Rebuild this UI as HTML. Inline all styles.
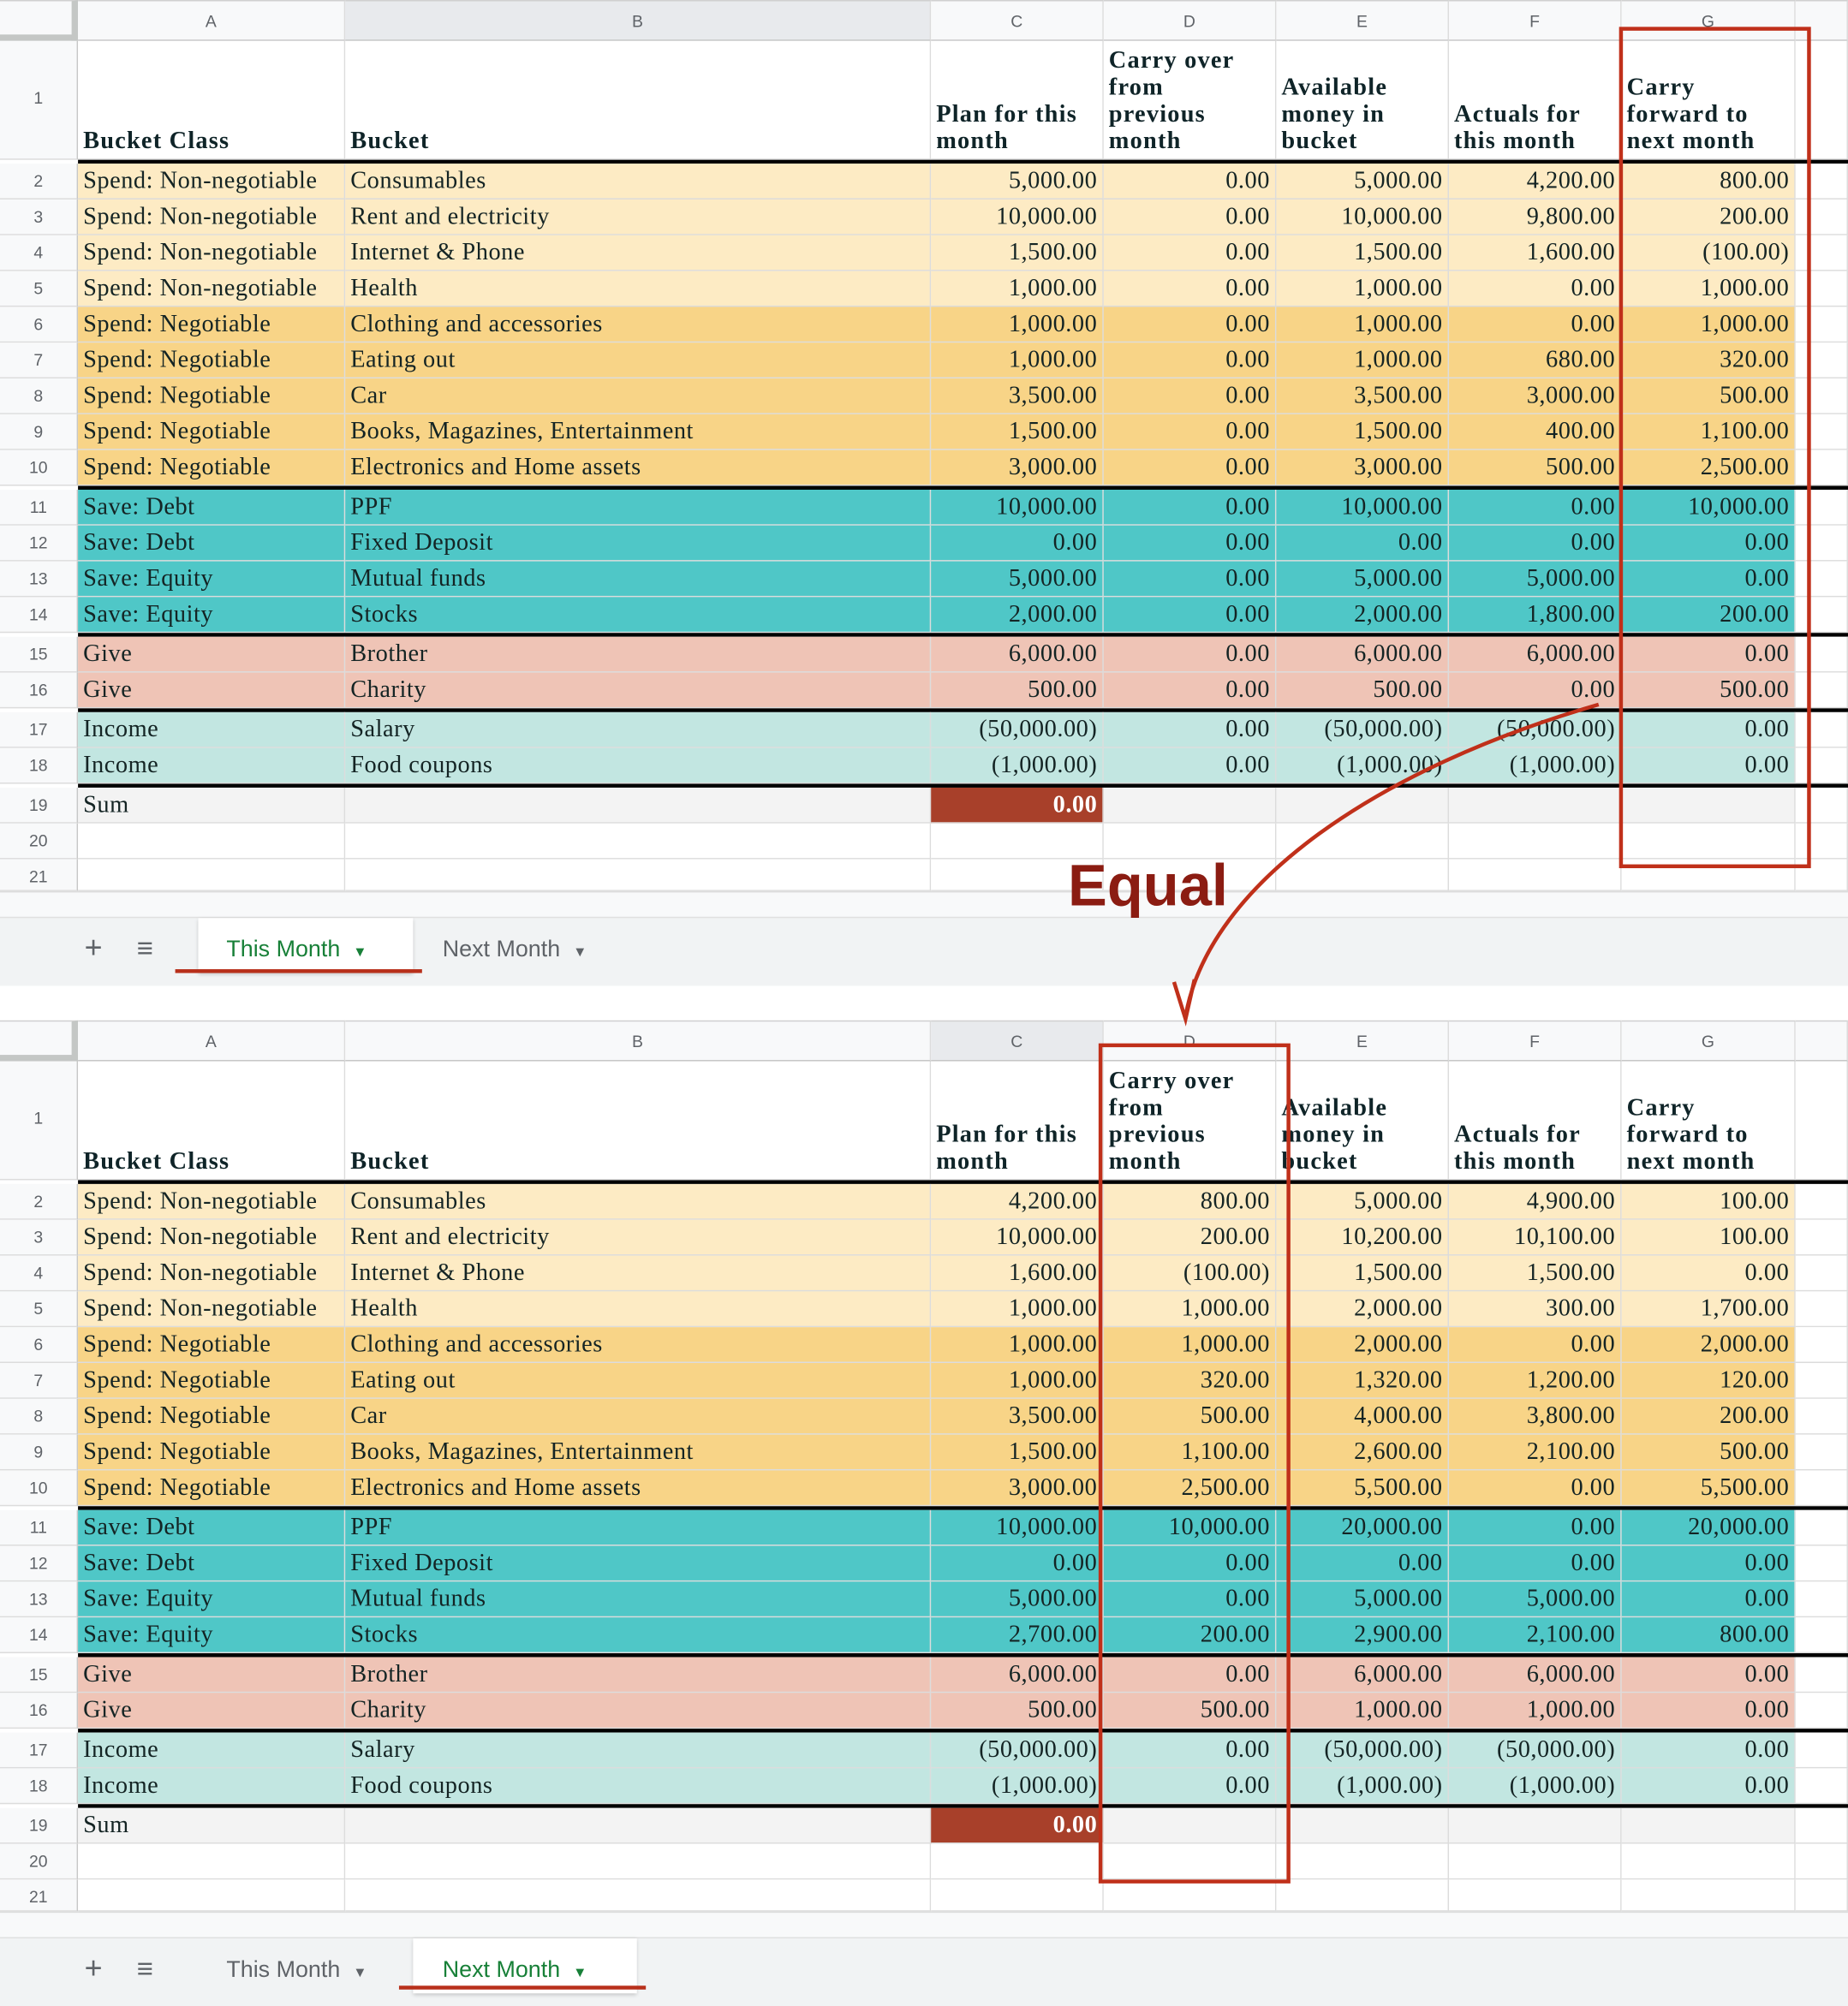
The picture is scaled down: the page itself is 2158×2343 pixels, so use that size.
<!DOCTYPE html>
<html><head><meta charset="utf-8">
<style>
html,body{margin:0;padding:0;background:#fff;}
body{width:2158px;height:2341px;overflow:hidden;position:relative;}
#w{position:absolute;left:0;top:0;width:1445px;height:1568px;transform:scale(1.49343);transform-origin:0 0;}
.pn{position:absolute;left:0;width:1445px;height:770px;}
.r,.hd,.h1{position:absolute;left:0;width:1445px;display:grid;grid-template-columns:61px 209px 458px 135px 135px 135px 135px 136px 41px;}
.r{height:28px;}
.r p,.h1 p,.hd p{margin:0;box-sizing:border-box;border-right:1px solid #dcdcdc;border-bottom:1px solid #dcdcdc;overflow:hidden;white-space:nowrap;}
.r p{font:19px/27px "Liberation Serif",serif;letter-spacing:0.35px;color:#142424;padding:0 4px;}
.r p:nth-child(n+4){text-align:right;}
.r p:first-child,.h1 p:first-child{background:#f8f9fa;font:13px/27px "Liberation Sans",sans-serif;letter-spacing:0;color:#5f6368;text-align:center;border-right:1px solid #c7c7c7;}
.r p:last-child{background:#fff;}
.hd{top:0;height:32px;}
.hd p{background:#f8f9fa;font:13px/32px "Liberation Sans",sans-serif;color:#5f6368;text-align:center;border-bottom:1px solid #c4c4c4;border-top:1px solid #d0d0d0;}
.hd p:first-child{border-right:5px solid #c4c7c5;border-bottom:5px solid #c4c7c5;}
.hd p.sel{background:#e8eaed;}
.h1{top:32px;height:93px;}
.h1 p{font:bold 19px/21px "Liberation Serif",serif;letter-spacing:0.8px;color:#0f2428;padding:0 4px 3px;display:flex;align-items:flex-end;white-space:nowrap;background:#fff;}
.h1 p:first-child{align-items:center;justify-content:center;font-weight:normal;line-height:21px;}
.tk{position:absolute;left:61px;width:1384px;height:3px;background:#000;}
.y1 p{background:#fdebc4;}
.y2 p{background:#f8d487;}
.t1 p{background:#4fc7c7;}
.g1 p{background:#efc4b6;}
.i1 p{background:#c2e6e1;}
.sm p{background:#f3f3f3;}
.wh p{background:#fff;}
.sm p.red{background:#a8402a;color:#fff;font-weight:bold;}
.strip{position:absolute;left:0;width:1445px;height:20px;background:#f8f9fa;border-top:1px solid #dcdcdc;}
.bar{position:absolute;left:0;width:1445px;height:53px;background:#f1f3f4;border-top:1px solid #e0e0e0;}
.bar span{position:absolute;font:18px/48px "Liberation Sans",sans-serif;color:#5f6368;}
.tab{position:absolute;top:0;height:43px;background:#fff;box-shadow:0 1px 3px rgba(0,0,0,.2);}
.act{color:#188038 !important;font-weight:bold;}
.ul{position:absolute;height:3px;background:#b8301b;}
.box{position:absolute;border:3px solid #c0301a;box-sizing:border-box;}
</style></head><body><div id="w">

<!-- TOP PANEL -->
<div class="pn" style="top:0">
<div class="hd"><p></p><p>A</p><p class="sel">B</p><p>C</p><p>D</p><p>E</p><p>F</p><p>G</p><p></p></div>
<div class="h1"><p>1</p><p>Bucket Class</p><p>Bucket</p><p><span>Plan for this<br>month</span></p><p><span>Carry over<br>from<br>previous<br>month</span></p><p><span>Available<br>money in<br>bucket</span></p><p><span>Actuals for<br>this month</span></p><p><span>Carry<br>forward to<br>next month</span></p><p></p></div>
<div class="tk" style="top:125px"></div>
<div class="r y1" style="top:128px"><p>2</p><p>Spend: Non-negotiable</p><p>Consumables</p><p>5,000.00</p><p>0.00</p><p>5,000.00</p><p>4,200.00</p><p>800.00</p><p></p></div>
<div class="r y1" style="top:156px"><p>3</p><p>Spend: Non-negotiable</p><p>Rent and electricity</p><p>10,000.00</p><p>0.00</p><p>10,000.00</p><p>9,800.00</p><p>200.00</p><p></p></div>
<div class="r y1" style="top:184px"><p>4</p><p>Spend: Non-negotiable</p><p>Internet &amp; Phone</p><p>1,500.00</p><p>0.00</p><p>1,500.00</p><p>1,600.00</p><p>(100.00)</p><p></p></div>
<div class="r y1" style="top:212px"><p>5</p><p>Spend: Non-negotiable</p><p>Health</p><p>1,000.00</p><p>0.00</p><p>1,000.00</p><p>0.00</p><p>1,000.00</p><p></p></div>
<div class="r y2" style="top:240px"><p>6</p><p>Spend: Negotiable</p><p>Clothing and accessories</p><p>1,000.00</p><p>0.00</p><p>1,000.00</p><p>0.00</p><p>1,000.00</p><p></p></div>
<div class="r y2" style="top:268px"><p>7</p><p>Spend: Negotiable</p><p>Eating out</p><p>1,000.00</p><p>0.00</p><p>1,000.00</p><p>680.00</p><p>320.00</p><p></p></div>
<div class="r y2" style="top:296px"><p>8</p><p>Spend: Negotiable</p><p>Car</p><p>3,500.00</p><p>0.00</p><p>3,500.00</p><p>3,000.00</p><p>500.00</p><p></p></div>
<div class="r y2" style="top:324px"><p>9</p><p>Spend: Negotiable</p><p>Books, Magazines, Entertainment</p><p>1,500.00</p><p>0.00</p><p>1,500.00</p><p>400.00</p><p>1,100.00</p><p></p></div>
<div class="r y2" style="top:352px"><p>10</p><p>Spend: Negotiable</p><p>Electronics and Home assets</p><p>3,000.00</p><p>0.00</p><p>3,000.00</p><p>500.00</p><p>2,500.00</p><p></p></div>
<div class="tk" style="top:380px"></div>
<div class="r t1" style="top:383px"><p>11</p><p>Save: Debt</p><p>PPF</p><p>10,000.00</p><p>0.00</p><p>10,000.00</p><p>0.00</p><p>10,000.00</p><p></p></div>
<div class="r t1" style="top:411px"><p>12</p><p>Save: Debt</p><p>Fixed Deposit</p><p>0.00</p><p>0.00</p><p>0.00</p><p>0.00</p><p>0.00</p><p></p></div>
<div class="r t1" style="top:439px"><p>13</p><p>Save: Equity</p><p>Mutual funds</p><p>5,000.00</p><p>0.00</p><p>5,000.00</p><p>5,000.00</p><p>0.00</p><p></p></div>
<div class="r t1" style="top:467px"><p>14</p><p>Save: Equity</p><p>Stocks</p><p>2,000.00</p><p>0.00</p><p>2,000.00</p><p>1,800.00</p><p>200.00</p><p></p></div>
<div class="tk" style="top:495px"></div>
<div class="r g1" style="top:498px"><p>15</p><p>Give</p><p>Brother</p><p>6,000.00</p><p>0.00</p><p>6,000.00</p><p>6,000.00</p><p>0.00</p><p></p></div>
<div class="r g1" style="top:526px"><p>16</p><p>Give</p><p>Charity</p><p>500.00</p><p>0.00</p><p>500.00</p><p>0.00</p><p>500.00</p><p></p></div>
<div class="tk" style="top:554px"></div>
<div class="r i1" style="top:557px"><p>17</p><p>Income</p><p>Salary</p><p>(50,000.00)</p><p>0.00</p><p>(50,000.00)</p><p>(50,000.00)</p><p>0.00</p><p></p></div>
<div class="r i1" style="top:585px"><p>18</p><p>Income</p><p>Food coupons</p><p>(1,000.00)</p><p>0.00</p><p>(1,000.00)</p><p>(1,000.00)</p><p>0.00</p><p></p></div>
<div class="tk" style="top:613px"></div>
<div class="r sm" style="top:616px"><p>19</p><p>Sum</p><p></p><p class="red">0.00</p><p></p><p></p><p></p><p></p><p></p></div>
<div class="r wh" style="top:644px"><p>20</p><p></p><p></p><p></p><p></p><p></p><p></p><p></p><p></p></div>
<div class="r wh" style="top:672px;height:25px"><p>21</p><p></p><p></p><p></p><p></p><p></p><p></p><p></p><p></p></div>
<div class="strip" style="top:697px"></div>
<div class="bar" style="top:717px">
<span style="left:66px;font-size:24px">+</span><span style="left:107px;font-size:22px">&#8801;</span>
<div class="tab" style="left:155px;width:168px"></div>
<span class="act" style="left:177px">This Month &nbsp;<small style="font-size:11px">&#9660;</small></span>
<span style="left:346px">Next Month &nbsp;<small style="font-size:11px">&#9660;</small></span>
</div>
<div class="ul" style="left:137px;top:758px;width:193px"></div>
</div>

<!-- BOTTOM PANEL -->
<div class="pn" style="top:798px">
<div class="hd"><p></p><p>A</p><p>B</p><p class="sel">C</p><p>D</p><p>E</p><p>F</p><p>G</p><p></p></div>
<div class="h1"><p>1</p><p>Bucket Class</p><p>Bucket</p><p><span>Plan for this<br>month</span></p><p><span>Carry over<br>from<br>previous<br>month</span></p><p><span>Available<br>money in<br>bucket</span></p><p><span>Actuals for<br>this month</span></p><p><span>Carry<br>forward to<br>next month</span></p><p></p></div>
<div class="tk" style="top:125px"></div>
<div class="r y1" style="top:128px"><p>2</p><p>Spend: Non-negotiable</p><p>Consumables</p><p>4,200.00</p><p>800.00</p><p>5,000.00</p><p>4,900.00</p><p>100.00</p><p></p></div>
<div class="r y1" style="top:156px"><p>3</p><p>Spend: Non-negotiable</p><p>Rent and electricity</p><p>10,000.00</p><p>200.00</p><p>10,200.00</p><p>10,100.00</p><p>100.00</p><p></p></div>
<div class="r y1" style="top:184px"><p>4</p><p>Spend: Non-negotiable</p><p>Internet &amp; Phone</p><p>1,600.00</p><p>(100.00)</p><p>1,500.00</p><p>1,500.00</p><p>0.00</p><p></p></div>
<div class="r y1" style="top:212px"><p>5</p><p>Spend: Non-negotiable</p><p>Health</p><p>1,000.00</p><p>1,000.00</p><p>2,000.00</p><p>300.00</p><p>1,700.00</p><p></p></div>
<div class="r y2" style="top:240px"><p>6</p><p>Spend: Negotiable</p><p>Clothing and accessories</p><p>1,000.00</p><p>1,000.00</p><p>2,000.00</p><p>0.00</p><p>2,000.00</p><p></p></div>
<div class="r y2" style="top:268px"><p>7</p><p>Spend: Negotiable</p><p>Eating out</p><p>1,000.00</p><p>320.00</p><p>1,320.00</p><p>1,200.00</p><p>120.00</p><p></p></div>
<div class="r y2" style="top:296px"><p>8</p><p>Spend: Negotiable</p><p>Car</p><p>3,500.00</p><p>500.00</p><p>4,000.00</p><p>3,800.00</p><p>200.00</p><p></p></div>
<div class="r y2" style="top:324px"><p>9</p><p>Spend: Negotiable</p><p>Books, Magazines, Entertainment</p><p>1,500.00</p><p>1,100.00</p><p>2,600.00</p><p>2,100.00</p><p>500.00</p><p></p></div>
<div class="r y2" style="top:352px"><p>10</p><p>Spend: Negotiable</p><p>Electronics and Home assets</p><p>3,000.00</p><p>2,500.00</p><p>5,500.00</p><p>0.00</p><p>5,500.00</p><p></p></div>
<div class="tk" style="top:380px"></div>
<div class="r t1" style="top:383px"><p>11</p><p>Save: Debt</p><p>PPF</p><p>10,000.00</p><p>10,000.00</p><p>20,000.00</p><p>0.00</p><p>20,000.00</p><p></p></div>
<div class="r t1" style="top:411px"><p>12</p><p>Save: Debt</p><p>Fixed Deposit</p><p>0.00</p><p>0.00</p><p>0.00</p><p>0.00</p><p>0.00</p><p></p></div>
<div class="r t1" style="top:439px"><p>13</p><p>Save: Equity</p><p>Mutual funds</p><p>5,000.00</p><p>0.00</p><p>5,000.00</p><p>5,000.00</p><p>0.00</p><p></p></div>
<div class="r t1" style="top:467px"><p>14</p><p>Save: Equity</p><p>Stocks</p><p>2,700.00</p><p>200.00</p><p>2,900.00</p><p>2,100.00</p><p>800.00</p><p></p></div>
<div class="tk" style="top:495px"></div>
<div class="r g1" style="top:498px"><p>15</p><p>Give</p><p>Brother</p><p>6,000.00</p><p>0.00</p><p>6,000.00</p><p>6,000.00</p><p>0.00</p><p></p></div>
<div class="r g1" style="top:526px"><p>16</p><p>Give</p><p>Charity</p><p>500.00</p><p>500.00</p><p>1,000.00</p><p>1,000.00</p><p>0.00</p><p></p></div>
<div class="tk" style="top:554px"></div>
<div class="r i1" style="top:557px"><p>17</p><p>Income</p><p>Salary</p><p>(50,000.00)</p><p>0.00</p><p>(50,000.00)</p><p>(50,000.00)</p><p>0.00</p><p></p></div>
<div class="r i1" style="top:585px"><p>18</p><p>Income</p><p>Food coupons</p><p>(1,000.00)</p><p>0.00</p><p>(1,000.00)</p><p>(1,000.00)</p><p>0.00</p><p></p></div>
<div class="tk" style="top:613px"></div>
<div class="r sm" style="top:616px"><p>19</p><p>Sum</p><p></p><p class="red">0.00</p><p></p><p></p><p></p><p></p><p></p></div>
<div class="r wh" style="top:644px"><p>20</p><p></p><p></p><p></p><p></p><p></p><p></p><p></p><p></p></div>
<div class="r wh" style="top:672px;height:25px"><p>21</p><p></p><p></p><p></p><p></p><p></p><p></p><p></p><p></p></div>
<div class="strip" style="top:697px"></div>
<div class="bar" style="top:717px">
<span style="left:66px;font-size:24px">+</span><span style="left:107px;font-size:22px">&#8801;</span>
<span style="left:177px">This Month &nbsp;<small style="font-size:11px">&#9660;</small></span>
<div class="tab" style="left:323px;width:175px"></div>
<span class="act" style="left:346px">Next Month &nbsp;<small style="font-size:11px">&#9660;</small></span>
</div>
<div class="ul" style="left:312px;top:755px;width:193px"></div>
</div>

<!-- annotations -->
<div class="box" style="left:1266px;top:21px;width:150px;height:658px"></div>
<div class="box" style="left:859px;top:816px;width:150px;height:657px"></div>
<svg style="position:absolute;left:0;top:0" width="1445" height="1568">
<path d="M1250,551 C1080,600 945,690 927,795" fill="none" stroke="#c0301a" stroke-width="3"/>
<path d="M918,768 L927,797 L934,766" fill="none" stroke="#c0301a" stroke-width="3"/>
<text x="835" y="708" font-family="Liberation Sans Narrow, Liberation Sans, sans-serif" font-size="46" font-weight="bold" fill="#8b1c12">Equal</text>
</svg>
</div></body></html>
